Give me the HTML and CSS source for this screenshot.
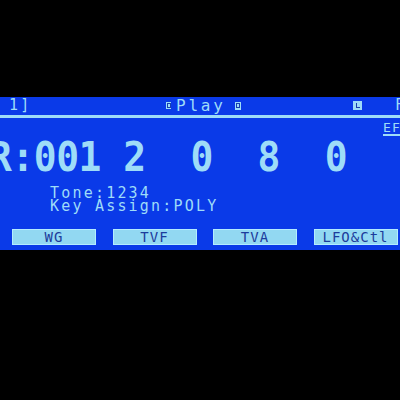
FILE: index.html
```html
<!DOCTYPE html>
<html>
<head>
<meta charset="utf-8">
<link rel="stylesheet" href="styles.css">
</head>
<body>
<div class="lcd">
  <div class="topbar">
    <span class="part">1]</span>
    <span class="play"><i class="ico"></i><span class="play-text">Play</span><i class="ico ico-right"></i></span>
    <span class="lcell"><i class="lbox"></i></span>
    <span class="f">F</span>
  </div>
  <div class="rule"></div>
  <div class="efrow"><span class="ef">EFX</span></div>
  <div class="big">R:001 2  0  8  0</div>
  <div class="info">
    <div class="line">Tone:1234</div>
    <div class="line">Key Assign:POLY</div>
  </div>
  <div class="buttons">
    <div class="btn">WG</div>
    <div class="btn">TVF</div>
    <div class="btn">TVA</div>
    <div class="btn">LFO&amp;Ctl</div>
  </div>
</div>
</body>
</html>
```
FILE: styles.css
```css
html, body {
  margin: 0;
  padding: 0;
  background: #000;
  width: 400px;
  height: 400px;
  overflow: hidden;
}
body {
  padding-top: 97px;
  box-sizing: border-box;
}
.lcd {
  width: 400px;
  height: 153px;
  background: #0a3ae8;
  color: #9edcf8;
  font-family: "DejaVu Sans Mono", monospace;
  display: flex;
  flex-direction: column;
  overflow: hidden;
}
.lcd > * {
  flex-shrink: 0;
}
.topbar {
  height: 18px;
  box-sizing: border-box;
  padding: 2px 0 0 9px;
  display: grid;
  grid-template-columns: 157px 187px 42px 1fr;
  align-items: start;
  font-size: 15px;
  line-height: 13px;
  letter-spacing: 2.2px;
  white-space: nowrap;
}
.play {
  display: flex;
  align-items: center;
  height: 13px;
}
.play-text {
  font-size: 16px;
  letter-spacing: 2.8px;
}
.ico {
  display: block;
  width: 5px;
  height: 7px;
  background: #9edcf8;
  position: relative;
  margin-right: 5px;
}
.ico::after {
  content: "";
  position: absolute;
  left: 1px;
  top: 1px;
  width: 2px;
  height: 3px;
  border: 1px solid #1a3fae;
}
.ico-right {
  margin-left: 9px;
  margin-right: 0;
  width: 6px;
  height: 8px;
}
.lcell {
  display: flex;
  height: 13px;
  align-items: center;
}
.lbox {
  display: block;
  width: 9px;
  height: 9px;
  background: #9edcf8;
  position: relative;
}
.lbox::after {
  content: "";
  position: absolute;
  left: 3px;
  top: 2px;
  width: 3px;
  height: 4px;
  border-left: 1px solid #1a3fae;
  border-bottom: 1px solid #1a3fae;
}
.rule {
  height: 3px;
  background: #9edcf8;
}
.efrow {
  height: 24px;
  box-sizing: border-box;
  padding: 5px 0 0 383px;
  white-space: nowrap;
  font-size: 13px;
  line-height: 10px;
  letter-spacing: 1.2px;
}
.ef {
  display: inline-block;
  border-bottom: 2px solid #9edcf8;
  padding-bottom: 1px;
}
.big {
  height: 30px;
  font-size: 38px;
  line-height: 30px;
  font-weight: bold;
  letter-spacing: -0.5px;
  white-space: pre;
  margin-left: -11px;
  transform: scaleY(1.08);
}
.info {
  margin-top: 15px;
  padding-left: 50px;
  font-size: 15px;
  line-height: 13px;
  letter-spacing: 2.2px;
}
.line {
  white-space: pre;
  height: 13px;
}
.buttons {
  margin-top: 16px;
  padding-left: 12px;
  display: flex;
  gap: 16.5px;
}
.btn {
  width: 84px;
  height: 16px;
  box-sizing: border-box;
  background: #92d8f2;
  border: 1px solid #b4ecff;
  color: #1c3c9c;
  font-size: 14px;
  line-height: 15px;
  letter-spacing: 1px;
  text-align: center;
  white-space: nowrap;
}
```
